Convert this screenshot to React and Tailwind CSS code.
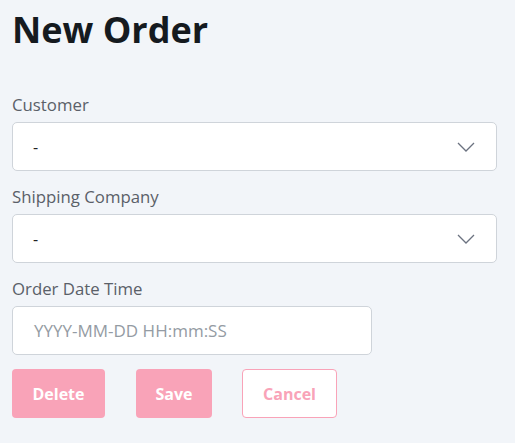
export default function App() {
  const font = { fontFamily: '"Open Sans", "Noto Sans", sans-serif' };
  const Chevron = () => (
    <svg width="18" height="10" viewBox="0 0 18 10" fill="none" className="absolute right-[21px] top-1/2 -translate-y-1/2">
      <path d="M1 1l8 8 8-8" stroke="#6b7280" strokeWidth="1.3" />
    </svg>
  );
  return (
    <div className="w-[515px] h-[443px] bg-[#f2f5f9] px-3 overflow-hidden" style={font}>
      <h1 className="text-[36px] leading-[43px] font-bold text-[#151a1f] pt-[8px] mb-[41px]">New Order</h1>
      <div className="mb-[13px] w-[485px]">
        <label className="block text-[16.8px] leading-[24px] text-[#5a6068] pt-[1px] mb-[5px]">Customer</label>
        <div className="relative h-[49px] bg-white border border-[#cfd4da] rounded-[5px] flex items-center pl-[20px] text-[16px] text-[#222]">
          -
          <Chevron />
        </div>
      </div>
      <div className="mb-[13px] w-[485px]">
        <label className="block text-[16.8px] leading-[24px] text-[#5a6068] pt-[1px] mb-[5px]">Shipping Company</label>
        <div className="relative h-[49px] bg-white border border-[#cfd4da] rounded-[5px] flex items-center pl-[20px] text-[16px] text-[#222]">
          -
          <Chevron />
        </div>
      </div>
      <div className="mb-[14px]">
        <label className="block text-[16.8px] leading-[24px] text-[#5a6068] pt-[1px] mb-[5px]">Order Date Time</label>
        <div className="w-[360px] h-[49px] bg-white border border-[#cfd4da] rounded-[5px] flex items-center pl-[21px] text-[17px] text-[#949ba3]">
          YYYY-MM-DD HH:mm:SS
        </div>
      </div>
      <div className="flex gap-[31px]">
        <button className="w-[93px] h-[49px] rounded-[4px] bg-[#f9a3b8] text-white font-bold text-[16px]">Delete</button>
        <button className="w-[76px] h-[49px] rounded-[4px] bg-[#f9a3b8] text-white font-bold text-[16px]">Save</button>
        <button className="w-[95px] h-[49px] rounded-[4px] bg-white border border-[#f9a3b8] text-[#f9a3b8] font-bold text-[16px] -ml-[1px]">Cancel</button>
      </div>
    </div>
  );
}
